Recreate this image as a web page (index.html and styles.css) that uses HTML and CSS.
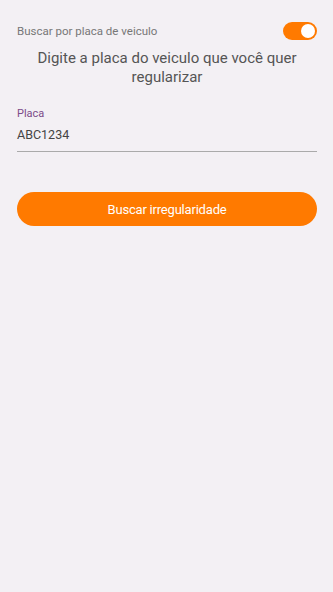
FILE: index.html
```html
<!DOCTYPE html>
<html lang="pt">
<head>
<meta charset="utf-8">
<link rel="stylesheet" href="styles.css">
</head>
<body>
<main class="screen">
  <div class="switch-row">
    <span class="switch-label">Buscar por placa de veiculo</span>
    <span class="switch"><span class="knob"></span></span>
  </div>
  <p class="heading">Digite a placa do veiculo que você quer regularizar</p>
  <div class="field">
    <label class="field-label">Placa</label>
    <div class="field-value">ABC1234</div>
  </div>
  <button class="btn">Buscar irregularidade</button>
</main>
</body>
</html>
```
FILE: styles.css
```css
html, body {
  margin: 0;
  padding: 0;
  background: #f3f0f4;
  font-family: Roboto, "Noto Sans", sans-serif;
}
.screen {
  padding: 22px 16px 0 17px;
  min-height: 592px;
  box-sizing: border-box;
}
.switch-row {
  display: flex;
  justify-content: space-between;
  align-items: center;
  height: 18px;
}
.switch-label {
  font-size: 11.5px;
  color: #777;
}
.switch {
  width: 34px;
  height: 18px;
  border-radius: 9px;
  background: #ff7a00;
  display: flex;
  align-items: center;
  justify-content: flex-end;
  padding: 0 2px;
  box-sizing: border-box;
}
.knob {
  width: 14px;
  height: 14px;
  border-radius: 50%;
  background: #fff;
}
.heading {
  margin: 9px 8px 0;
  text-align: center;
  font-size: 15px;
  line-height: 19px;
  color: #555;
}
.field {
  margin-top: 20px;
  border-bottom: 1px solid #aaa;
  padding-bottom: 9px;
}
.field-label {
  display: block;
  font-size: 11px;
  color: #7b4a88;
  line-height: 14px;
}
.field-value {
  margin-top: 6px;
  font-size: 12.5px;
  color: #444;
  line-height: 15px;
}
.btn {
  display: block;
  width: 100%;
  margin-top: 40px;
  height: 34px;
  border: none;
  border-radius: 17px;
  background: #ff7a00;
  color: #fff;
  font-family: Roboto, "Noto Sans", sans-serif;
  font-size: 13px;
  letter-spacing: -0.2px;
  padding: 0;
}
```
